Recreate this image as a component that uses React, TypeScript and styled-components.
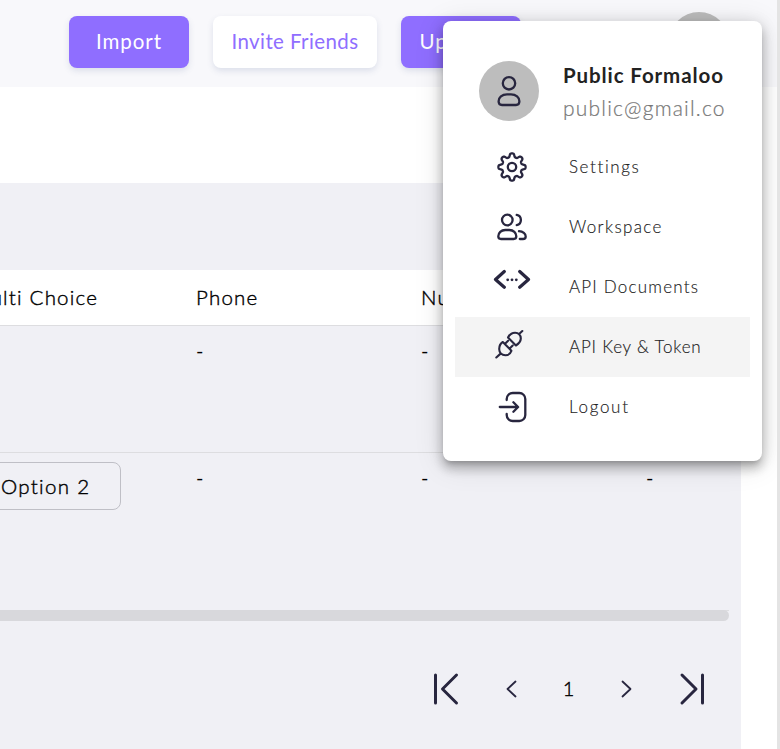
import React from "react";
import styled, { createGlobalStyle } from "styled-components";

const INK = "#28263f";
const PURPLE = "#8f6eff";

const GlobalStyle = createGlobalStyle`
  * { box-sizing: border-box; }
  body { margin: 0; background: #fff; overflow: hidden; }
`;

const Page = styled.div`
  position: relative;
  display: flex;
  flex-direction: column;
  width: 780px;
  height: 749px;
  overflow: hidden;
  background: #fff;
  border-right: 3px solid #e4e4e4;
  font-family: Lato, "Liberation Sans", sans-serif;
  color: #000;
`;

const TopBar = styled.header`
  display: flex;
  align-items: flex-start;
  gap: 24px;
  height: 87px;
  flex: none;
  padding: 16px 0 0 69px;
  background: #f8f8fb;
`;

const Button = styled.button<{ $filled?: boolean; $width: number }>`
  width: ${(p) => p.$width}px;
  height: 52px;
  padding: 0 0 2px;
  border: 0;
  border-radius: 8px;
  background: ${(p) => (p.$filled ? PURPLE : "#fff")};
  color: ${(p) => (p.$filled ? "#fff" : PURPLE)};
  box-shadow: 0 3px 6px rgba(70, 90, 140, 0.15);
  font: 400 20.5px/50px Lato, sans-serif;
  letter-spacing: ${(p) => (p.$filled ? 0.9 : 0.4)}px;
  white-space: nowrap;
`;

const HeaderAvatar = styled.div`
  width: 60px;
  height: 60px;
  margin: -4px 0 0 124px;
  border-radius: 50%;
  background: #bdbdbd;
`;

const Panel = styled.main`
  width: 741px;
  flex: 1;
  margin-top: 96px;
  padding-top: 87px;
  overflow: hidden;
  background: #f0f0f5;
`;

const Row = styled.div<{ $head?: boolean; $last?: boolean; $height: number }>`
  display: grid;
  grid-template-columns: repeat(4, 225px);
  width: ${(p) => (p.$last ? 758 : 900)}px;
  height: ${(p) => p.$height}px;
  margin-left: -29px;
  border-bottom: 1px solid #dddde0;
  background: ${(p) => (p.$head ? "#fff" : "transparent")};
`;

const HeadCell = styled.div`
  font-size: 20.5px;
  font-weight: 300;
  -webkit-text-stroke: 0.4px #000;
  line-height: 54px;
  letter-spacing: 1.2px;
`;

const Cell = styled.div`
  padding-top: 9px;
  font-size: 20px;
  line-height: 30px;
`;

const Chip = styled.div`
  width: 150px;
  height: 48px;
  padding-left: 29px;
  border: 1px solid #bfbfc6;
  border-radius: 8px;
  font-size: 20.5px;
  font-weight: 300;
  -webkit-text-stroke: 0.4px #000;
  line-height: 46px;
  letter-spacing: 1.3px;
`;

const ScrollTrack = styled.div`
  width: 729px;
  height: 11px;
  margin-top: -1px;
  border-radius: 0 6px 6px 0;
  background: #d8d8dc;
`;

const Pager = styled.nav`
  display: grid;
  grid-template-columns: 32px 32px 32px 32px 32px;
  column-gap: 25px;
  align-items: center;
  height: 40px;
  margin: 48px 0 0 430px;
`;

const PageNumber = styled.span`
  padding: 0 0 2px 17px;
  text-align: center;
  font-size: 20px;
  font-weight: 300;
  -webkit-text-stroke: 0.4px #000;
`;

const Drawing = styled.svg<{ $line?: number }>`
  display: block;
  overflow: visible;
  fill: none;
  stroke: ${INK};
  stroke-width: ${(p) => p.$line ?? 2.3};
  stroke-linecap: round;
  stroke-linejoin: round;
`;

const Menu = styled.aside`
  position: absolute;
  left: 443px;
  top: 21px;
  width: 319px;
  height: 440px;
  padding: 40px 12px 24px;
  border-radius: 8px;
  background: #fff;
  box-shadow: 0 5px 5px -3px rgba(0, 0, 0, 0.2), 0 8px 10px 1px rgba(0, 0, 0, 0.14),
    0 3px 14px 2px rgba(0, 0, 0, 0.12), 0 4px 30px rgba(0, 0, 0, 0.12);
`;

const Profile = styled.div`
  display: flex;
  gap: 24px;
  height: 76px;
  padding-left: 24px;
`;

const Avatar = styled.div`
  flex: none;
  width: 60px;
  height: 60px;
  border-radius: 50%;
  background: #bdbdbd;
`;

const Name = styled.div`
  padding-top: 1px;
  font-size: 20.5px;
  font-weight: 700;
  line-height: 26px;
  letter-spacing: 0.9px;
  color: #222;
  white-space: nowrap;
`;

const Email = styled.div`
  margin-top: 7px;
  font-size: 21px;
  font-weight: 300;
  -webkit-text-stroke: 0.2px #777;
  line-height: 26px;
  letter-spacing: 1.2px;
  color: #777;
  white-space: nowrap;
`;

const MenuItem = styled.div<{ $active?: boolean; $spacing: number }>`
  display: flex;
  align-items: center;
  gap: 37px;
  height: 60px;
  padding-left: 37px;
  background: ${(p) => (p.$active ? "#f4f4f4" : "transparent")};
  font-size: 17px;
  font-weight: 300;
  -webkit-text-stroke: 0.15px #222;
  letter-spacing: ${(p) => p.$spacing}px;
  color: #222;
`;

const MenuLabel = styled.span`
  padding-bottom: 1px;
  white-space: nowrap;
`;

const gearPath = (() => {
  const points: string[] = [];
  for (let i = 0; i < 240; i++) {
    const a = (i / 240) * Math.PI * 2;
    const tooth = Math.tanh(1.7 * Math.cos(8 * a)) / Math.tanh(1.7);
    const r = 11.8 + 1.8 * tooth;
    points.push(`${(20 + r * Math.sin(a)).toFixed(2)} ${(20 - r * Math.cos(a)).toFixed(2)}`);
  }
  return `M${points.join("L")}Z`;
})();

const icons = {
  settings: (
    <>
      <path d={gearPath} />
      <circle cx="20" cy="20" r="4.2" />
    </>
  ),
  workspace: (
    <>
      <circle cx="15.3" cy="13" r="5.3" />
      <path d="M13.3 23h4c4.200 0 7 3 7 6.300 0 2-1 2.700-2.700 2.700H9c-1.700 0-2.700-.7-2.700-2.700C6.300 26 9.100 23 13.300 23Z" />
      <path d="M24.700 7.900a5.200 5.200 0 0 1 0 10.200M27 24.200c4 .2 6.700 2.600 6.700 5.200 0 1.800-1.100 2.600-2.700 2.600h-3.200" />
    </>
  ),
  docs: (
    <>
      <path strokeWidth="3.2" d="M12.300 4.500l-8.800 8 8.800 7.700M27.700 4.500l8.800 8-8.800 7.700" />
      <g fill={INK} stroke="none">
        <circle cx="15.700" cy="12.800" r="1.400" />
        <circle cx="20" cy="12.800" r="1.400" />
        <circle cx="24.300" cy="12.800" r="1.400" />
      </g>
    </>
  ),
  plug: (
    <path
      strokeWidth="2.1"
      d="M16 10.500l7.900 8c2.300-1.500 4.800-3.800 4.900-6.900.1-3.600-2.500-6-5.800-5.900-3.300.2-5.700 2.200-7 4.800ZM27.400 6.700l2.900-2.700M10.800 15l8.600 8.800c-1 2.800-3.200 4.500-6 4.500-3.600 0-6.200-2.700-6.200-6.200 0-3 1.300-5.700 3.600-7.100ZM8.300 26.900l-4 3.600M12.800 17l3.300-3.200M17.400 21.700l3.300-3.200"
    />
  ),
  logout: (
    <path d="M14.700 13v-1a6 6 0 0 1 6-6h6.600a6 6 0 0 1 6 6v16a6 6 0 0 1-6 6h-6.600a6 6 0 0 1-6-6v-1M7.800 20h18M21.400 15.300l4.700 4.700-4.700 4.700" />
  ),
};

const items: { icon: keyof typeof icons; label: string; spacing: number; active?: boolean }[] = [
  { icon: "settings", label: "Settings", spacing: 1.6 },
  { icon: "workspace", label: "Workspace", spacing: 1.35 },
  { icon: "docs", label: "API Documents", spacing: 1.2 },
  { icon: "plug", label: "API Key & Token", spacing: 0.8, active: true },
  { icon: "logout", label: "Logout", spacing: 1.7 },
];

function PagerIcon({ d, line }: { d: string; line: number }) {
  return (
    <Drawing width="32" height="32" viewBox="0 0 32 32" $line={line}>
      <path d={d} />
    </Drawing>
  );
}

export default function App() {
  return (
    <>
      <GlobalStyle />
      <Page>
        <TopBar>
          <Button $filled $width={120}>Import</Button>
          <Button $width={164}>Invite Friends</Button>
          <Button $filled $width={120}>Upgrade</Button>
          <HeaderAvatar />
        </TopBar>
        <Panel>
          <Row $head $height={56}>
            <HeadCell>Multi Choice</HeadCell>
            <HeadCell>Phone</HeadCell>
            <HeadCell>Number</HeadCell>
            <HeadCell />
          </Row>
          <Row $height={127}>
            <Cell />
            <Cell>-</Cell>
            <Cell>-</Cell>
            <Cell />
          </Row>
          <Row $last $height={158}>
            <Cell>
              <Chip>Option 2</Chip>
            </Cell>
            <Cell>-</Cell>
            <Cell>-</Cell>
            <Cell>-</Cell>
          </Row>
          <ScrollTrack />
          <Pager>
            <PagerIcon line={3} d="M5.500 2v28M26.500 2l-14 14 14 14" />
            <PagerIcon line={1.8} d="M28.500 8.500l-8 7.500 8 7.500" />
            <PageNumber>1</PageNumber>
            <PagerIcon line={1.8} d="M21.500 8.500l8 7.500-8 7.500" />
            <PagerIcon line={3} d="M24 2l14 14-14 14M44.500 2v28" />
          </Pager>
        </Panel>
        <Menu>
          <Profile>
            <Avatar>
              <Drawing width="60" height="60" viewBox="0 0 60 60">
                <circle cx="30" cy="22.300" r="6.200" />
                <path d="M28 33.300h4c5 0 8.400 3.200 8.400 7 0 2.500-1.200 3.700-3.400 3.700H23c-2.200 0-3.400-1.200-3.400-3.700 0-3.800 3.400-7 8.400-7Z" />
              </Drawing>
            </Avatar>
            <div>
              <Name>Public Formaloo</Name>
              <Email>public@gmail.co</Email>
            </div>
          </Profile>
          {items.map((item) => (
            <MenuItem key={item.label} $active={item.active} $spacing={item.spacing}>
              <Drawing width="40" height="40" viewBox="0 0 40 40">
                {icons[item.icon]}
              </Drawing>
              <MenuLabel>{item.label}</MenuLabel>
            </MenuItem>
          ))}
        </Menu>
      </Page>
    </>
  );
}
